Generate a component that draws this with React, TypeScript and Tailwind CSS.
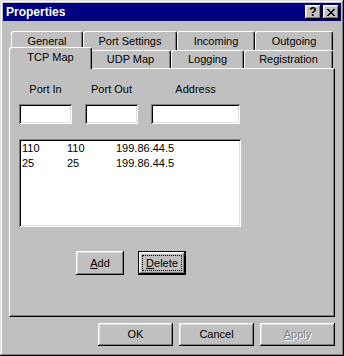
import React from 'react';

const raised =
  'shadow-[inset_-1px_-1px_0_#000,inset_1px_1px_0_#fff,inset_-2px_-2px_0_#808080,inset_2px_2px_0_#dfdfdf]';
const sunken =
  'shadow-[inset_1px_1px_0_#808080,inset_-1px_-1px_0_#fff,inset_2px_2px_0_#000,inset_-2px_-2px_0_#dfdfdf]';

const upperTabs = [
  { label: 'General', w: 'w-[72px]' },
  { label: 'Port Settings', w: 'w-[94px]' },
  { label: 'Incoming', w: 'w-[78px]' },
  { label: 'Outgoing', w: 'w-[78px]' },
];

const lowerTabs = [
  { label: 'UDP Map', w: 'w-[81px]' },
  { label: 'Logging', w: 'w-[73px]' },
  { label: 'Registration', w: 'w-[89px]' },
];

const rows = [
  { portIn: '110', portOut: '110', address: '199.86.44.5' },
  { portIn: '25', portOut: '25', address: '199.86.44.5' },
];

const tabEdge =
  'flex items-center justify-center bg-[#c0c0c0] border-t border-l border-r border-white border-r-black rounded-t-[3px] shadow-[inset_-1px_0_0_#808080]';

const CloseGlyph = () => (
  <svg width="8" height="7" viewBox="0 0 8 7" shapeRendering="crispEdges">
    <g fill="#000">
      <rect x="0" y="0" width="2" height="1" />
      <rect x="6" y="0" width="2" height="1" />
      <rect x="1" y="1" width="2" height="1" />
      <rect x="5" y="1" width="2" height="1" />
      <rect x="2" y="2" width="4" height="1" />
      <rect x="3" y="3" width="2" height="1" />
      <rect x="2" y="4" width="4" height="1" />
      <rect x="1" y="5" width="2" height="1" />
      <rect x="5" y="5" width="2" height="1" />
      <rect x="0" y="6" width="2" height="1" />
      <rect x="6" y="6" width="2" height="1" />
    </g>
  </svg>
);

const Field = ({ label, w }: { label: string; w: string }) => (
  <div className="flex flex-col items-center">
    <span className="leading-[13px]">{label}</span>
    <div className={`mt-[8px] h-[20px] bg-white ${w} ${sunken}`} />
  </div>
);

export default function App() {
  return (
    <div
      className={`w-[344px] h-[356px] bg-[#c0c0c0] p-[3px] flex flex-col text-black text-[11px] leading-[13px] font-['Liberation_Sans',Arial,sans-serif] shadow-[inset_-1px_-1px_0_#000,inset_1px_1px_0_#dfdfdf,inset_-2px_-2px_0_#808080,inset_2px_2px_0_#fff]`}
    >
      {/* caption */}
      <div className="h-[18px] bg-[#000080] flex items-center justify-between pl-[3px] pr-[2px]">
        <span className="text-white font-bold text-[12px] leading-[18px]">Properties</span>
        <div className="flex gap-[2px]">
          <div className={`w-[16px] h-[14px] bg-[#c0c0c0] flex items-center justify-center font-bold text-[12px] leading-none ${raised}`}>
            ?
          </div>
          <div className={`w-[16px] h-[14px] bg-[#c0c0c0] flex items-center justify-center ${raised}`}>
            <CloseGlyph />
          </div>
        </div>
      </div>

      <div className="px-[6px] mt-[10px]">
        {/* tab rows */}
        <div className="flex h-[19px] mx-[2px]">
          {upperTabs.map((t) => (
            <div key={t.label} className={`h-[19px] ${t.w} ${tabEdge}`}>
              {t.label}
            </div>
          ))}
        </div>
        <div className="flex items-start h-[18px] mx-[2px]">
          <div className={`relative z-10 -mt-[3px] -mx-[2px] h-[22px] w-[83px] pb-[3px] ${tabEdge}`}>
            TCP Map
          </div>
          {lowerTabs.map((t) => (
            <div key={t.label} className={`h-[18px] ${t.w} ${tabEdge}`}>
              {t.label}
            </div>
          ))}
        </div>

        {/* panel */}
        <div className="h-[249px] border border-white border-r-black border-b-black shadow-[inset_-1px_-1px_0_#808080] pl-[9px] pt-[14px]">
          <div className="flex gap-[13px]">
            <Field label="Port In" w="w-[53px]" />
            <Field label="Port Out" w="w-[53px]" />
            <Field label="Address" w="w-[89px]" />
          </div>

          <div className={`mt-[15px] w-[222px] h-[88px] bg-white p-[2px] pl-[3px] ${sunken}`}>
            {rows.map((r, i) => (
              <div key={i} className="flex leading-[15px]">
                <span className="w-[45px]">{r.portIn}</span>
                <span className="w-[49px]">{r.portOut}</span>
                <span>{r.address}</span>
              </div>
            ))}
          </div>

          <div className="mt-[24px] ml-[57px] flex gap-[14px]">
            <button className={`w-[48px] h-[24px] bg-[#c0c0c0] ${raised}`}>
              <span className="underline underline-offset-[1px]">A</span>dd
            </button>
            <button className="relative w-[48px] h-[24px] bg-[#c0c0c0] border border-black">
              <span className={`absolute inset-0 ${raised}`} />
              <span className="absolute inset-[3px] border border-dotted border-black" />
              <span className="relative">
                <span className="underline underline-offset-[1px]">D</span>elete
              </span>
            </button>
          </div>
        </div>

        {/* dialog buttons */}
        <div className="mt-[6px] flex justify-end gap-[6px]">
          <button className={`w-[75px] h-[23px] bg-[#c0c0c0] ${raised}`}>OK</button>
          <button className={`w-[75px] h-[23px] bg-[#c0c0c0] ${raised}`}>Cancel</button>
          <button className={`w-[75px] h-[23px] bg-[#c0c0c0] text-[#808080] [text-shadow:1px_1px_0_#fff] ${raised}`}>
            <span className="underline underline-offset-[1px]">A</span>pply
          </button>
        </div>
      </div>
    </div>
  );
}
